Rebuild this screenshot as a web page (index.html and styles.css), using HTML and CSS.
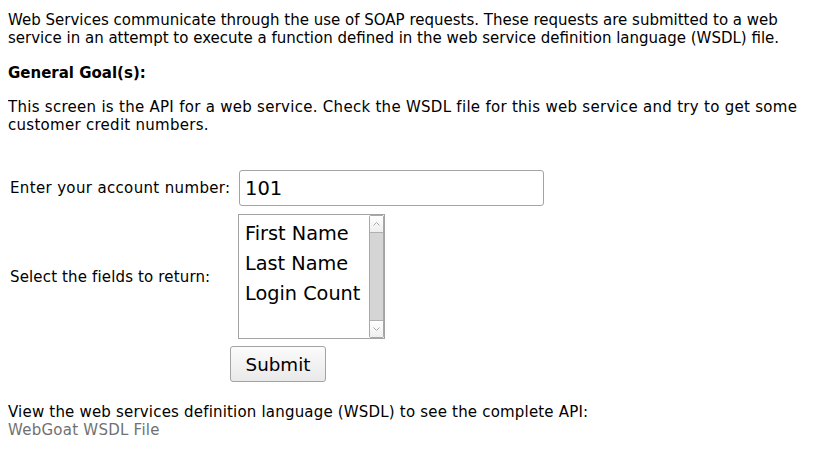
FILE: index.html
```html
<!DOCTYPE html>
<html>
<head>
<meta charset="utf-8">
<link rel="stylesheet" href="styles.css">
</head>
<body>
<p class="intro">Web Services communicate through the use of SOAP requests. These requests are submitted to a web service in an attempt to execute a function defined in the web service definition language (WSDL) file.</p>
<div class="goal">General Goal(s):</div>
<p class="task">This screen is the API for a web service. Check the WSDL file for this web service and try to get some customer credit numbers.</p>
<form class="api-form">
  <div class="field-grid">
    <label class="field-label label-acct" for="acct">Enter your account number:</label>
    <div class="field-cell"><input id="acct" class="text-input" type="text" value="101"></div>
    <div class="field-label label-fields">Select the fields to return:</div>
    <div class="field-cell">
      <div class="listbox">
        <div class="list-items">
          <div class="list-item">First Name</div>
          <div class="list-item">Last Name</div>
          <div class="list-item">Login Count</div>
        </div>
        <div class="scrollbar">
          <div class="sb-btn sb-up">
            <svg width="9" height="6" viewBox="0 0 9 6"><path d="M1.5 4.5 L4.5 1.5 L7.5 4.5" fill="none" stroke="#aaaaaa" stroke-width="1"/></svg>
          </div>
          <div class="sb-track"></div>
          <div class="sb-btn sb-down">
            <svg width="9" height="6" viewBox="0 0 9 6"><path d="M1.5 1.5 L4.5 4.5 L7.5 1.5" fill="none" stroke="#aaaaaa" stroke-width="1"/></svg>
          </div>
        </div>
      </div>
    </div>
  </div>
  <div class="submit-row"><button type="button" class="submit-btn">Submit</button></div>
</form>
<div class="wsdl">
  <div class="wsdl-text">View the web services definition language (WSDL) to see the complete API:</div>
  <a class="wsdl-link" href="#">WebGoat WSDL File</a>
</div>
</body>
</html>
```
FILE: styles.css
```css
html, body {
  background: #ffffff;
}
body {
  margin: 8px;
  font-family: "DejaVu Sans", "Liberation Sans", sans-serif;
  font-size: 15px;
  line-height: 18px;
  color: #000000;
}
.intro {
  margin: 3px 0 0 0;
}
.goal {
  margin-top: 17px;
  font-weight: bold;
}
.task {
  margin: 16px 0 0 0;
  letter-spacing: 0.28px;
}
.api-form {
  margin: 36px 0 0 0;
}
.field-grid {
  display: grid;
  grid-template-columns: 228px auto;
  row-gap: 8px;
  padding-left: 2px;
  align-items: center;
}
.field-label {
  display: block;
}
.label-acct {
  letter-spacing: 0.35px;
}
.label-fields {
  letter-spacing: 0.15px;
}
.field-cell {
  display: flex;
}
.text-input {
  box-sizing: border-box;
  width: 305px;
  height: 36px;
  margin: 0 0 0 1px;
  padding: 0 5px;
  border: 1px solid #a3a3a3;
  border-radius: 3px;
  font-family: "DejaVu Sans", sans-serif;
  font-size: 19.5px;
  color: #000000;
  background: #ffffff;
  outline: none;
}
.listbox {
  box-sizing: border-box;
  width: 147px;
  height: 125px;
  border: 1px solid #a3a3a3;
  display: flex;
  background: #ffffff;
}
.list-items {
  flex: 1;
  padding: 4px 0 0 6px;
  font-size: 19.3px;
  line-height: 30px;
}
.list-item {
  white-space: nowrap;
}
.scrollbar {
  box-sizing: border-box;
  width: 15px;
  border: 1px solid #a8a8a8;
  border-radius: 2px;
  display: flex;
  flex-direction: column;
  background: #d5d5d5;
}
.sb-btn {
  height: 16px;
  background: linear-gradient(#ffffff, #eeeeee);
  display: flex;
  align-items: center;
  justify-content: center;
}
.sb-up {
  border-bottom: 1px solid #b0b0b0;
}
.sb-down {
  border-top: 1px solid #b0b0b0;
}
.sb-track {
  flex: 1;
}
.submit-row {
  margin-top: 7px;
  padding-left: 222px;
  display: flex;
}
.submit-btn {
  box-sizing: border-box;
  width: 96px;
  height: 36px;
  margin: 0;
  padding: 0;
  border: 1px solid #a3a3a3;
  border-radius: 3px;
  background: linear-gradient(#fbfbfb, #e9e9e9);
  font-family: "DejaVu Sans", sans-serif;
  font-size: 18.3px;
  color: #000000;
}
.wsdl {
  margin-top: 21px;
}
.wsdl-text {
  letter-spacing: 0.19px;
}
.wsdl-link {
  color: #717171;
  text-decoration: none;
  letter-spacing: 0.25px;
}
```
